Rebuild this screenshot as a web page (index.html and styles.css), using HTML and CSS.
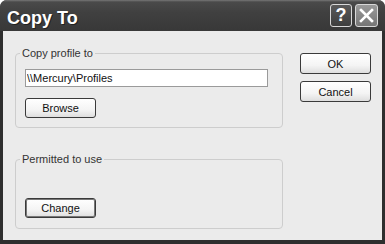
FILE: index.html
```html
<!DOCTYPE html>
<html lang="en">
<head>
    <meta charset="UTF-8">
    <meta name="viewport" content="width=device-width, initial-scale=1.0">
    <title>Copy To</title>
    <link rel="stylesheet" href="styles.css">
</head>
<body>
    <div class="window">
        <div class="titlebar">
            <span class="title">Copy To</span>
            <div class="title-buttons">
                <button class="tbtn help">?</button>
                <button class="tbtn close">
                    <svg width="15" height="15" viewBox="0 0 15 15"><path d="M2 2 L13 13 M13 2 L2 13" stroke="#fff" stroke-width="2.6" stroke-linecap="square"/></svg>
                </button>
            </div>
        </div>
        <div class="client">
            <div class="groups">
                <fieldset class="group">
                    <legend>Copy profile to</legend>
                    <input type="text" class="path" value="\\Mercury\Profiles">
                    <button class="btn browse">Browse</button>
                </fieldset>
                <fieldset class="group perm">
                    <legend>Permitted to use</legend>
                    <div class="perm-list"></div>
                    <button class="btn default">Change</button>
                </fieldset>
            </div>
            <div class="actions">
                <button class="btn action">OK</button>
                <button class="btn action">Cancel</button>
            </div>
        </div>
    </div>
</body>
</html>
```

FILE: styles.css
```css
body { margin: 0; background: #fff; font-family: "Liberation Sans", Arial, sans-serif; font-size: 11px; color: #222; }
.window { width: 385px; height: 244px; background: #2e2e2e; border-radius: 7px 7px 0 0; overflow: hidden; display: flex; flex-direction: column; }

.titlebar { height: 31px; flex: none; display: flex; justify-content: space-between; background: linear-gradient(#777 0, #4a4a4a 2px, #404040 40%, #383838 100%); }
.title { padding: 4px 0 0 7px; line-height: 28px; font-size: 18px; font-weight: bold; color: #fff; text-shadow: 1px 1px 0 #222; }
.title-buttons { display: flex; gap: 3px; padding: 4px 7px 0 0; }
.tbtn { width: 23px; height: 23px; padding: 0; border: 1px solid #d8d8d8; border-radius: 3px; color: #fff; display: flex; align-items: center; justify-content: center; font-family: "Liberation Sans", Arial, sans-serif; }
.help { width: 22px; background: linear-gradient(#5a5a5a, #3e3e3e); font-size: 18px; font-weight: bold; }
.close { background: linear-gradient(#9a9a9a, #767676); }

.client { flex: 1; margin: 0 3px 4px; background: #ebebeb; display: flex; padding: 15px 0 0 12px; }
.groups { width: 268px; }
.group { box-sizing: border-box; width: 268px; margin: 0; padding: 9px 9px 9px 9px; border: 1px solid #cdcdcd; border-radius: 4px; }
.group legend { margin-left: -5px; padding: 0 2px; line-height: 14px; color: #333; }
.perm { margin-top: 24px; padding-bottom: 10px; }
.perm-list { height: 23px; }

.path { display: block; box-sizing: border-box; width: 243px; height: 18px; margin: 0; padding: 0 0 0 1px; border: 1px solid #9a9a9a; background: #fff; font-family: inherit; font-size: 11px; color: #111; }

.btn { display: block; box-sizing: border-box; width: 71px; height: 20px; padding: 0; border: 1px solid #3a3a3a; border-radius: 3px; background: linear-gradient(#fff 0, #f4f4f4 60%, #dedede 100%); font-family: inherit; font-size: 11px; color: #111; }
.browse { margin-top: 11px; }
.default { box-shadow: inset 0 0 0 1px #777; }

.actions { padding: 7px 0 0 17px; display: flex; flex-direction: column; gap: 7px; }
.action { height: 21px; }
```
